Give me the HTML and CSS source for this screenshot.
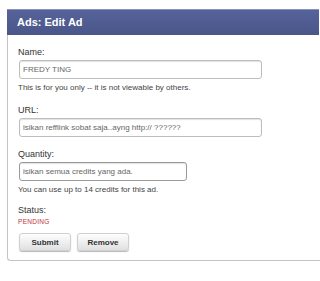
FILE: index.html
```html
<!DOCTYPE html>
<html lang="en">
<head>
    <meta charset="UTF-8">
    <title>Ads: Edit Ad</title>
    <link rel="stylesheet" href="styles.css">
</head>
<body>
    <div id="panel">
        <div id="header">Ads: Edit Ad</div>
        <div id="body">
            <div class="field">
                <div class="label">Name:</div>
                <input class="input" type="text" value="FREDY TING">
                <div class="hint">This is for you only -- it is not viewable by others.</div>
            </div>
            <div class="field">
                <div class="label">URL:</div>
                <input class="input" type="text" value="isikan refflink sobat saja..ayng http:// ??????">
            </div>
            <div class="field tight">
                <div class="label">Quantity:</div>
                <input class="input short" type="text" value="isikan semua credits yang ada.">
                <div class="hint">You can use up to 14 credits for this ad.</div>
            </div>
            <div class="field">
                <div class="label status-label">Status:</div>
                <div class="status">PENDING</div>
            </div>
            <div id="btn-container">
                <button class="btn">Submit</button>
                <button class="btn">Remove</button>
            </div>
        </div>
    </div>
</body>
</html>
```

FILE: styles.css
```css
body {
    margin: 0;
    padding: 9px 0 0 7px;
    background-color: white;
    font-family: "Liberation Sans", Arial, sans-serif;
    color: #333;
}

#panel {
    width: 313px;
}

#header {
    height: 26px;
    line-height: 25px;
    padding-left: 10px;
    margin-right: 1px;
    background: linear-gradient(#56639a, #4a5688);
    border-top: 1px solid #8790b8;
    color: white;
    font-size: 11px;
    font-weight: bold;
    box-sizing: border-box;
}

#body {
    border: 1px solid #c4c4c4;
    border-top: 0;
    border-right: 0;
    border-radius: 0 0 0 4px;
    box-shadow: 0 1px 1px #e0e0e0;
    padding: 11px 0 0 10px;
    height: 226px;
    box-sizing: border-box;
}

.field {
    margin-bottom: 11px;
}

.tight {
    margin-bottom: 9px;
}

.label {
    font-size: 9px;
    line-height: 12px;
    margin-bottom: 2px;
}

.status-label {
    margin-bottom: 1px;
}

.input {
    display: block;
    width: 243px;
    height: 19px;
    box-sizing: border-box;
    border: 1px solid #bdbdbd;
    border-radius: 3px;
    box-shadow: inset 0 1px 1px #e2e2e2;
    padding: 0 3px;
    margin: 0 0 0 1px;
    font-family: "Liberation Sans", Arial, sans-serif;
    font-size: 8px;
    color: #666;
}

.short {
    width: 168px;
    border-color: #9a9a9a;
}

.hint {
    font-size: 8px;
    line-height: 10px;
    margin-top: 4px;
    color: #444;
}

.status {
    font-size: 6.5px;
    line-height: 10px;
    letter-spacing: 0.3px;
    color: #c2303c;
}

#btn-container {
    margin-top: -5px;
    display: flex;
    gap: 6px;
    margin-left: 1px;
}

.btn {
    width: 52px;
    height: 18px;
    padding: 0;
    border: 1px solid #d0d0d0;
    border-radius: 3px;
    background: linear-gradient(#fefefe, #e0e0e0);
    box-shadow: 0 1px 1px #b8b8b8;
    font-family: "Liberation Sans", Arial, sans-serif;
    font-size: 8px;
    font-weight: bold;
    color: #333;
}
```
